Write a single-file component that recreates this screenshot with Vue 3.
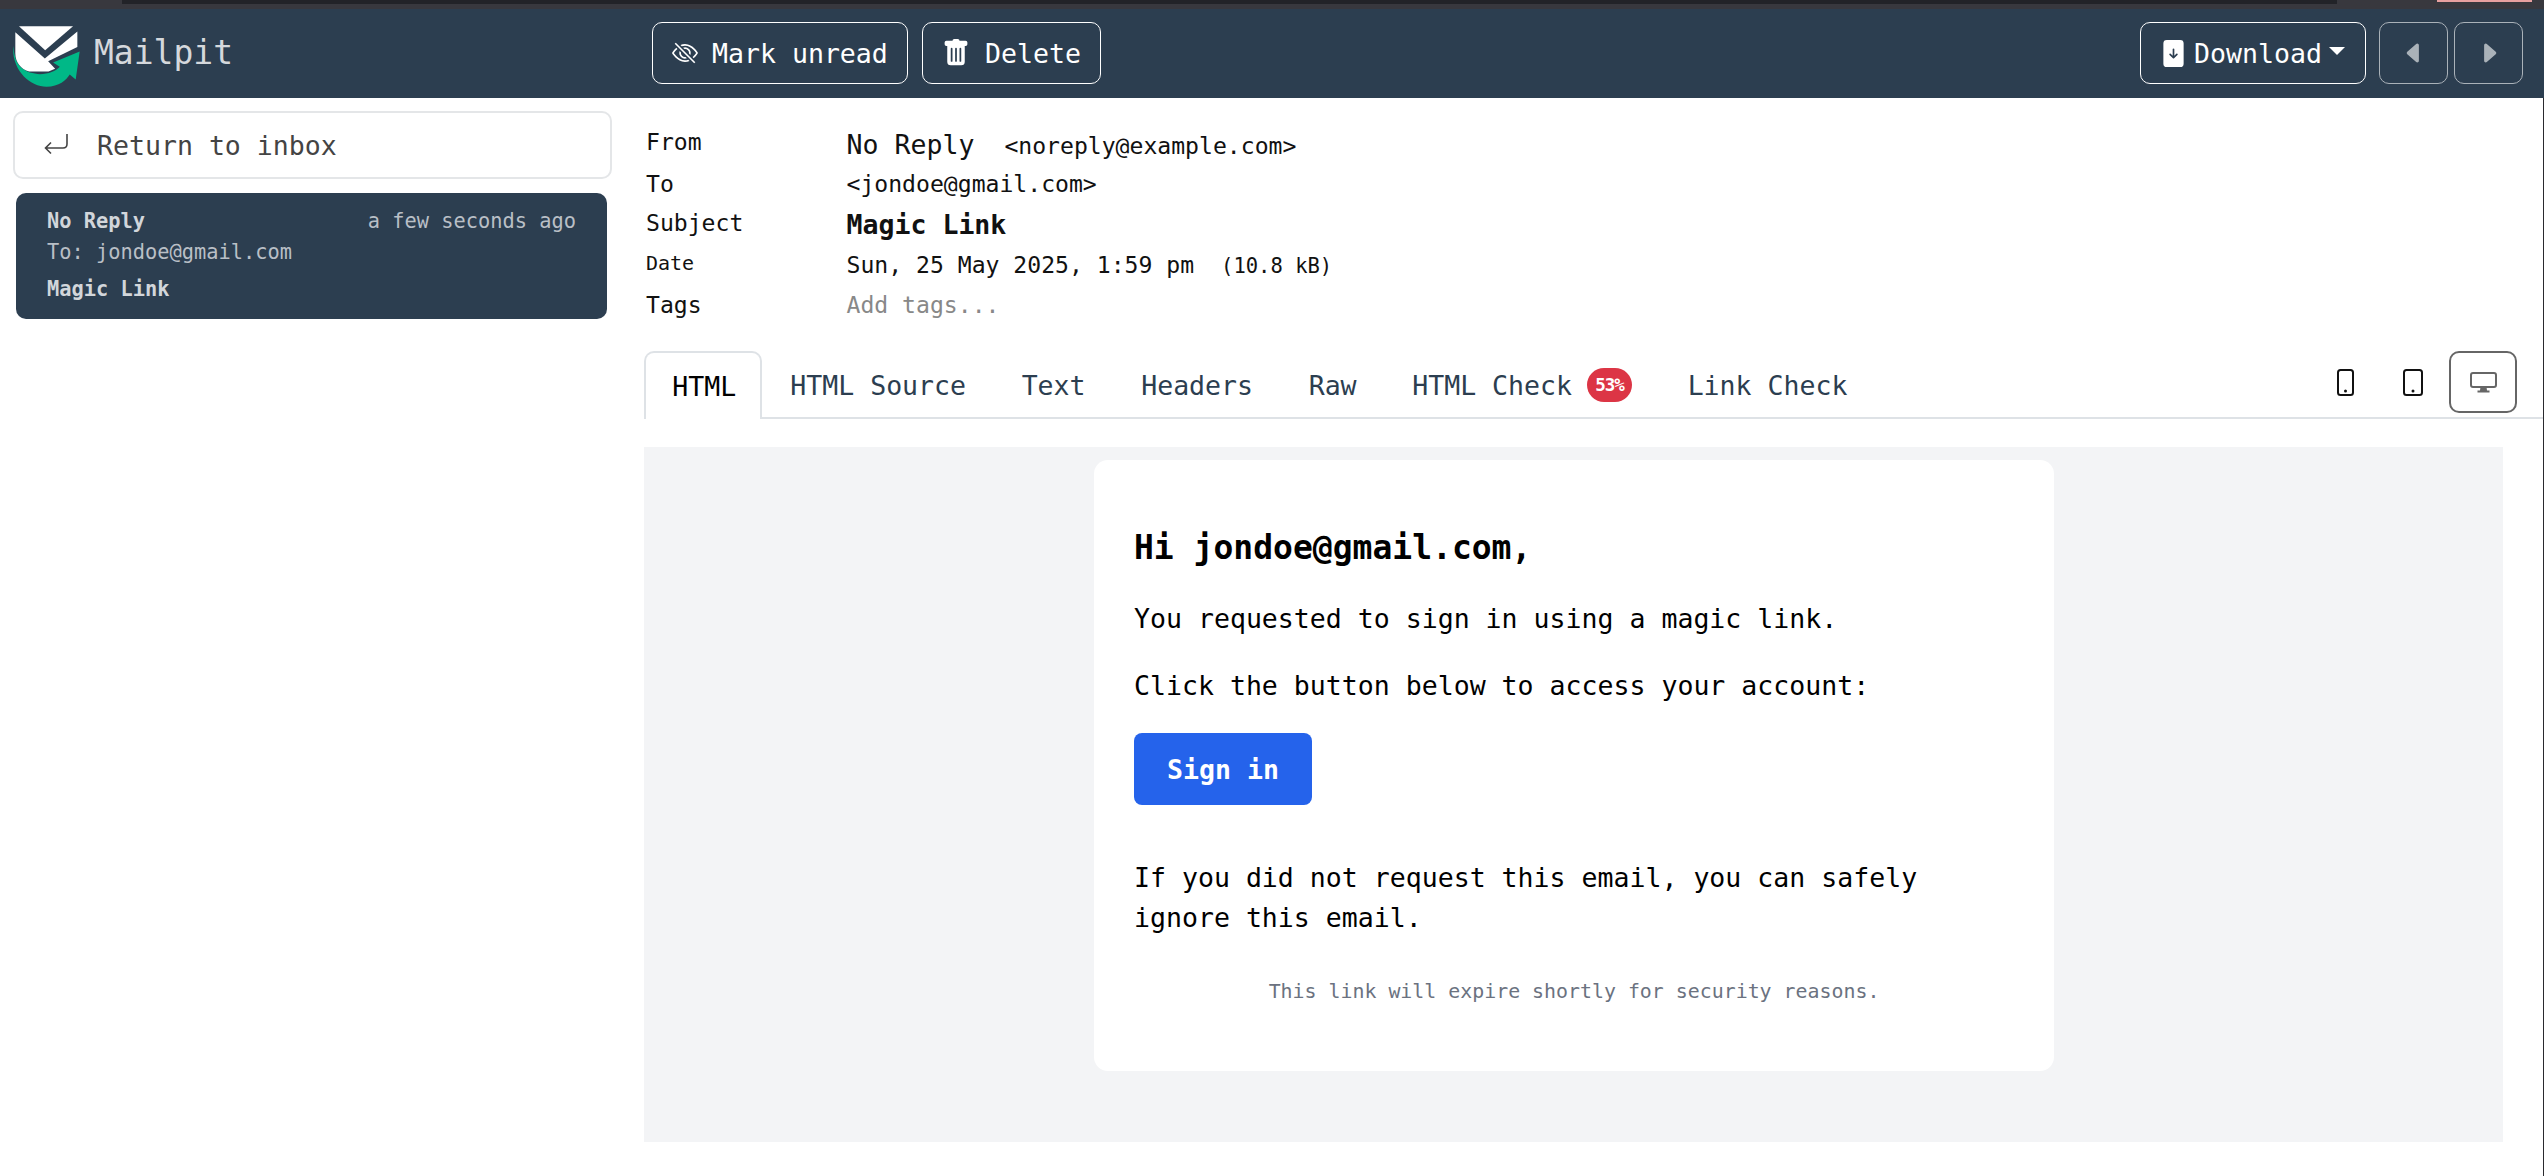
<script setup>
const tabs = [
  { name: "HTML", active: true },
  { name: "HTML Source" },
  { name: "Text" },
  { name: "Headers" },
  { name: "Raw" },
  { name: "HTML Check", badge: "53%" },
  { name: "Link Check" },
]
</script>

<template>
  <div class="page">
    <div class="chrome">
      <div class="chrome-tab"></div>
      <div class="chrome-pink"></div>
    </div>

    <header class="navbar">
      <div class="brand">
        <svg class="logo" viewBox="36 66 208 188" width="69" height="63">
          <path fill="#00b887" d="M40 128C34 200 90 251 140 251C178 251 200 230 210 214L228 229L240 145L160 178L180 191C160 214 100 226 62 192C46 176 42 150 40 128Z" />
          <path fill="#fff" d="M57 69H220L136 141Z" />
          <path fill="#fff" d="M46 87L135 166L233 85V131L145 174L166 197L146 205H88C62 198 46 176 46 150Z" />
        </svg>
        <span class="brand-name">Mailpit</span>
      </div>

      <div class="nav-actions">
        <button class="nav-btn btn-unread">
          <svg viewBox="0 0 16 16" width="26" height="26" fill="currentColor">
            <path d="M13.359 11.238C15.06 9.72 16 8 16 8s-3-5.5-8-5.5a7 7 0 0 0-2.79.588l.77.771A6 6 0 0 1 8 3.5c2.12 0 3.879 1.168 5.168 2.457A13 13 0 0 1 14.828 8q-.086.13-.195.288c-.335.48-.83 1.12-1.465 1.755q-.247.248-.517.486z" />
            <path d="M11.297 9.176a3.5 3.5 0 0 0-4.474-4.474l.823.823a2.5 2.5 0 0 1 2.829 2.829zm-2.943 1.299.822.822a3.5 3.5 0 0 1-4.474-4.474l.823.823a2.5 2.5 0 0 0 2.829 2.829" />
            <path d="M3.35 5.47q-.27.24-.518.487A13 13 0 0 0 1.172 8l.195.288c.335.48.83 1.12 1.465 1.755C4.121 11.332 5.881 12.5 8 12.5c.716 0 1.39-.133 2.02-.36l.77.772A7 7 0 0 1 8 13.5C3 13.500 0 8 0 8s.939-1.721 2.641-3.238l.708.709zm10.296 8.884-12-12 .708-.708 12 12z" />
          </svg>
          Mark unread
        </button>
        <button class="nav-btn btn-delete">
          <svg viewBox="0 0 16 16" width="28" height="28" fill="currentColor">
            <path d="M2.5 1a1 1 0 0 0-1 1v1a1 1 0 0 0 1 1H3v9a2 2 0 0 0 2 2h6a2 2 0 0 0 2-2V4h.5a1 1 0 0 0 1-1V2a1 1 0 0 0-1-1H10a1 1 0 0 0-1-1H7a1 1 0 0 0-1 1zm3 4a.5.5 0 0 1 .5.5v7a.5.5 0 0 1-1 0v-7a.5.5 0 0 1 .5-.5M8 5a.5.5 0 0 1 .5.5v7a.5.5 0 0 1-1 0v-7A.5.5 0 0 1 8 5m3 .5v7a.5.5 0 0 1-1 0v-7a.5.5 0 0 1 1 0" />
          </svg>
          Delete
        </button>
      </div>

      <div class="nav-right">
        <button class="nav-btn btn-download">
          <svg viewBox="0 0 16 16" width="27" height="27" fill="currentColor">
            <path d="M12 0H4a2 2 0 0 0-2 2v12a2 2 0 0 0 2 2h8a2 2 0 0 0 2-2V2a2 2 0 0 0-2-2M8 5a.5.5 0 0 1 .5.5v3.793l1.146-1.147a.5.5 0 0 1 .708.708l-2 2a.5.5 0 0 1-.708 0l-2-2a.5.5 0 1 1 .708-.708L7.5 9.293V5.500A.5.5 0 0 1 8 5" />
          </svg>
          Download
          <span class="caret"></span>
        </button>
        <button class="nav-btn btn-page disabled">
          <svg viewBox="0 0 16 16" width="26" height="26" fill="currentColor">
            <path d="m3.86 8.753 5.482 4.796c.646.566 1.658.106 1.658-.753V3.204a1 1 0 0 0-1.659-.753l-5.48 4.796a1 1 0 0 0 0 1.506z" />
          </svg>
        </button>
        <button class="nav-btn btn-page disabled">
          <svg viewBox="0 0 16 16" width="26" height="26" fill="currentColor">
            <path d="m12.14 8.753-5.482 4.796c-.646.566-1.658.106-1.658-.753V3.204a1 1 0 0 1 1.659-.753l5.48 4.796a1 1 0 0 1 0 1.506z" />
          </svg>
        </button>
      </div>
    </header>

    <div class="body">
      <aside class="sidebar">
        <a class="back-link">
          <svg viewBox="0 0 24 22" width="24" height="22" fill="none" stroke="currentColor" stroke-width="1.6">
            <path d="M23 1V11Q23 15 19 15H1.500M7 9.500L1.500 15L7 20.500" />
          </svg>
          Return to inbox
        </a>
        <div class="msg-card">
          <div class="msg-top">
            <b>No Reply</b>
            <span class="msg-time">a few seconds ago</span>
          </div>
          <div class="msg-to">To: jondoe@gmail.com</div>
          <div class="msg-subject">Magic Link</div>
        </div>
      </aside>

      <main class="main">
        <div class="details">
          <div class="label">From</div>
          <div class="value"><span class="big">No Reply</span><span class="addr">&lt;noreply@example.com&gt;</span></div>
          <div class="label flush">To</div>
          <div class="value">&lt;jondoe@gmail.com&gt;</div>
          <div class="label">Subject</div>
          <div class="value big"><b>Magic Link</b></div>
          <div class="label small">Date</div>
          <div class="value">Sun, 25 May 2025, 1:59 pm<span class="size">(10.8 kB)</span></div>
          <div class="label flush">Tags</div>
          <div class="value muted">Add tags...</div>
        </div>

        <div class="tabs">
          <div v-for="tab in tabs" :key="tab.name" class="tab" :class="{ active: tab.active }">
            {{ tab.name }}
            <span v-if="tab.badge" class="badge">{{ tab.badge }}</span>
          </div>

          <div class="devices">
            <div class="device">
              <svg viewBox="0 0 17 27" width="17" height="27">
                <rect x="1" y="1" width="15" height="25" rx="2.500" fill="none" stroke="#111" stroke-width="2" />
                <circle cx="8.500" cy="22" r="1.500" fill="#111" />
              </svg>
            </div>
            <div class="device">
              <svg viewBox="0 0 20 27" width="20" height="27">
                <rect x="1" y="1" width="18" height="25" rx="2.500" fill="none" stroke="#111" stroke-width="2" />
                <circle cx="10" cy="22" r="1.500" fill="#111" />
              </svg>
            </div>
            <div class="device selected">
              <svg viewBox="0 0 27 21" width="27" height="21">
                <rect x="1" y="1" width="25" height="14" rx="2" fill="none" stroke="#666" stroke-width="2" />
                <path fill="#666" d="M10.500 15H16.500L17 18.500H19.500V20.500H7.500V18.500H10Z" />
              </svg>
            </div>
          </div>
        </div>

        <section class="preview">
          <article class="mail">
            <h1>Hi jondoe@gmail.com,</h1>
            <p>You requested to sign in using a magic link.</p>
            <p>Click the button below to access your account:</p>
            <a class="signin">Sign in</a>
            <p class="ignore">If you did not request this email, you can safely ignore this email.</p>
            <p class="expire">This link will expire shortly for security reasons.</p>
          </article>
        </section>
      </main>
    </div>
  </div>
</template>

<style>
html, body {
  margin: 0;
  background: #fff;
}
</style>

<style scoped>
.page {
  width: 2544px;
  height: 1176px;
  overflow: hidden;
  font-family: "DejaVu Sans Mono", "Liberation Mono", monospace;
  font-size: 26.55px;
  color: #111;
}

.chrome {
  position: relative;
  height: 9px;
  background: #38383e;
}

.chrome-tab {
  position: absolute;
  left: 122px;
  top: 0;
  width: 2215px;
  height: 4px;
  background: #222328;
}

.chrome-pink {
  position: absolute;
  left: 2437px;
  top: 0;
  width: 95px;
  height: 2px;
  background: #e8a0a0;
}

.navbar {
  display: flex;
  align-items: center;
  height: 89px;
  padding-bottom: 1px;
  box-sizing: border-box;
  background: #2c3e50;
  color: #fff;
}

.brand {
  display: flex;
  align-items: center;
  width: 652px;
  padding-left: 12px;
  box-sizing: border-box;
}

.logo {
  margin-top: 6px;
}

.brand-name {
  margin-left: 13px;
  margin-top: -2px;
  font-size: 33px;
  color: #d5d8dc;
}

.nav-actions,
.nav-right {
  display: flex;
  align-items: center;
}

.nav-right {
  margin-left: auto;
  margin-right: 21px;
}

.nav-btn {
  display: flex;
  align-items: center;
  justify-content: center;
  height: 62px;
  padding: 0;
  border: 1.5px solid #fff;
  border-radius: 10px;
  background: transparent;
  color: #fff;
  font: inherit;
  box-sizing: border-box;
}

.btn-unread {
  width: 256px;
  justify-content: flex-start;
  gap: 14px;
  padding-left: 19px;
  margin-right: 14px;
}

.btn-delete {
  width: 179px;
  justify-content: flex-start;
  gap: 15px;
  padding-left: 19px;
}

.btn-download {
  width: 226px;
  justify-content: flex-start;
  gap: 7px;
  padding-left: 19px;
  margin-right: 13px;
}

.caret {
  width: 0;
  height: 0;
  margin-top: -4px;
  border-left: 8px solid transparent;
  border-right: 8px solid transparent;
  border-top: 8px solid #fff;
}

.btn-page {
  width: 69px;
  margin-right: 6px;
}

.btn-page:last-child {
  margin-right: 0;
}

.disabled {
  opacity: 0.6;
}

.body {
  display: flex;
  border-right: 1.5px solid #2a2a2e;
  height: 1078px;
  box-sizing: border-box;
}

.sidebar {
  width: 644px;
  flex: none;
  padding: 13px 0 0 13px;
  box-sizing: border-box;
}

.back-link {
  display: flex;
  align-items: center;
  gap: 29px;
  width: 599px;
  height: 68px;
  padding-left: 29px;
  box-sizing: border-box;
  border: 2px solid #e4e6e8;
  border-radius: 10px;
  color: #444;
}

.back-link svg {
  margin-top: -3px;
}

.msg-card {
  width: 591px;
  height: 126px;
  margin: 14px 0 0 3px;
  padding: 15px 31px;
  box-sizing: border-box;
  border-radius: 10px;
  background: #2c3e50;
  color: #d2d6db;
  font-size: 20.35px;
}

.msg-top {
  display: flex;
  justify-content: space-between;
  line-height: 27px;
}

.msg-time {
  color: #b9bfc6;
}

.msg-to {
  margin-top: 2px;
  line-height: 31px;
  color: #b9bfc6;
}

.msg-subject {
  margin-top: 6px;
  line-height: 31px;
  font-weight: 700;
}

.main {
  flex: 1;
  min-width: 0;
}

.details {
  display: grid;
  grid-template-columns: 200.5px 1fr;
  grid-auto-rows: 40.3px;
  align-items: center;
  padding: 26px 0 0 2px;
  height: 253px;
  box-sizing: border-box;
  font-size: 23.1px;
}

.label {
  padding-bottom: 4px;
}

.label.flush {
  padding-bottom: 0;
}

.label.small {
  font-size: 20px;
}

.big {
  font-size: 26.55px;
}

.addr {
  margin-left: 30px;
}

.size {
  margin-left: 27px;
  font-size: 20.5px;
}

.muted {
  color: #888;
}

.tabs {
  display: flex;
  align-items: stretch;
  height: 68px;
  border-bottom: 2px solid #dee2e6;
  box-sizing: border-box;
}

.tab {
  display: flex;
  align-items: center;
  margin-right: 1.6px;
  padding: 0 27px;
  color: #2c3e50;
  height: 68px;
  box-sizing: border-box;
}

.tab.active {
  margin-right: 1px;
  padding: 0 24px 0 26.3px;
  border: 2px solid #dee2e6;
  border-bottom: 0;
  border-radius: 10px 10px 0 0;
  background: #fff;
  color: #000;
}

.badge {
  display: flex;
  align-items: center;
  justify-content: center;
  width: 45px;
  height: 34px;
  margin-left: 15px;
  border-radius: 17px;
  background: #dc3545;
  color: #fff;
  font-size: 17.5px;
  font-weight: 700;
  letter-spacing: -1px;
}

.devices {
  display: flex;
  align-items: center;
  gap: 0;
  margin-left: auto;
  margin-right: 26px;
  height: 62px;
}

.device {
  display: flex;
  align-items: center;
  justify-content: center;
  width: 68px;
  height: 62px;
  box-sizing: border-box;
}

.device.selected {
  margin-left: 2px;
  border: 2px solid #666;
  border-radius: 10px;
}

.preview {
  height: 695px;
  width: 1859px;
  margin-top: 28px;
  padding-top: 13px;
  box-sizing: border-box;
  background: #f3f4f6;
}

.mail {
  width: 960px;
  height: 611px;
  margin-left: 450px;
  padding: 66px 40px 0;
  box-sizing: border-box;
  border-radius: 14px;
  background: #fff;
  color: #000;
}

h1 {
  margin: 0 0 29px;
  font-size: 33px;
  line-height: 44px;
  font-weight: 700;
}

p {
  margin: 0 0 27px;
  line-height: 40px;
}

.signin {
  display: flex;
  align-items: center;
  justify-content: center;
  width: 178px;
  height: 72px;
  border-radius: 8px;
  background: #2563eb;
  color: #fff;
  font-weight: 700;
}

.ignore {
  margin-top: 53px;
  margin-bottom: 34px;
}

.expire {
  margin: 0;
  font-size: 19.9px;
  line-height: 40px;
  text-align: center;
  color: #6b7280;
}
</style>
